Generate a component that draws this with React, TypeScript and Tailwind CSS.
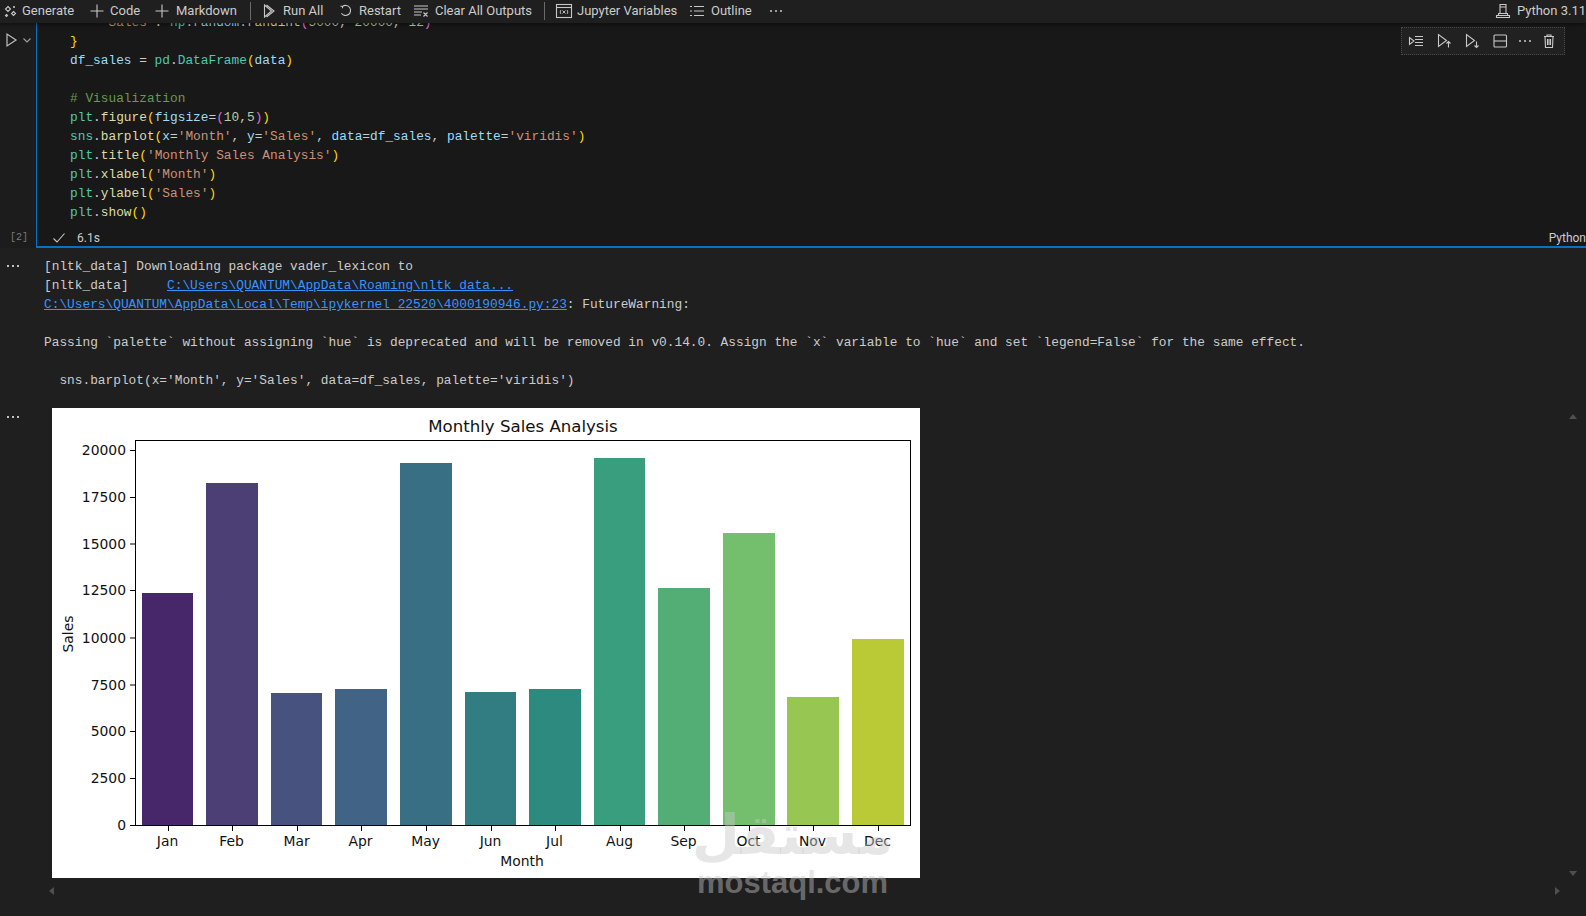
import type { ReactNode } from "react";

const ui = "font-['Roboto','Liberation_Sans',sans-serif]";
const mono = "font-['Liberation_Mono',monospace]";

const P = ({ c, children }: { c: string; children: ReactNode }) => <span style={{ color: c }}>{children}</span>;
const V = "#9cdcfe";
const F = "#dcdcaa";
const S = "#ce9178";
const T = "#4ec9b0";
const G = "#ffd700";
const M = "#da70d6";

const Mod = ({ n }: { n: string }) => <P c={T}>{n}</P>;

const codeLines: ReactNode[] = [
  <>
    {"    "}
    <P c={S}>'Sales'</P>: <Mod n="np" />.<P c={V}>random</P>.<P c={F}>randint</P>
    <P c={M}>(</P>
    <P c="#b5cea8">5000</P>, <P c="#b5cea8">20000</P>, <P c="#b5cea8">12</P>
    <P c={M}>)</P>
  </>,
  <P c={G}>{"}"}</P>,
  <>
    <P c={V}>df_sales</P> = <Mod n="pd" />.<P c={T}>DataFrame</P>
    <P c={G}>(</P>
    <P c={V}>data</P>
    <P c={G}>)</P>
  </>,
  <>&nbsp;</>,
  <P c="#6a9955"># Visualization</P>,
  <>
    <Mod n="plt" />.<P c={F}>figure</P>
    <P c={G}>(</P>
    <P c={V}>figsize</P>=<P c={M}>(</P>
    <P c="#b5cea8">10</P>,<P c="#b5cea8">5</P>
    <P c={M}>)</P>
    <P c={G}>)</P>
  </>,
  <>
    <Mod n="sns" />.<P c={F}>barplot</P>
    <P c={G}>(</P>
    <P c={V}>x</P>=<P c={S}>'Month'</P>, <P c={V}>y</P>=<P c={S}>'Sales'</P>, <P c={V}>data</P>=<P c={V}>df_sales</P>,{" "}
    <P c={V}>palette</P>=<P c={S}>'viridis'</P>
    <P c={G}>)</P>
  </>,
  <>
    <Mod n="plt" />.<P c={F}>title</P>
    <P c={G}>(</P>
    <P c={S}>'Monthly Sales Analysis'</P>
    <P c={G}>)</P>
  </>,
  <>
    <Mod n="plt" />.<P c={F}>xlabel</P>
    <P c={G}>(</P>
    <P c={S}>'Month'</P>
    <P c={G}>)</P>
  </>,
  <>
    <Mod n="plt" />.<P c={F}>ylabel</P>
    <P c={G}>(</P>
    <P c={S}>'Sales'</P>
    <P c={G}>)</P>
  </>,
  <>
    <Mod n="plt" />.<P c={F}>show</P>
    <P c={G}>()</P>
  </>,
];

const bars = [
  { m: "Jan", x0: 142, x1: 193, top: 593, fill: "#48266a" },
  { m: "Feb", x0: 206, x1: 258, top: 483, fill: "#4b3f75" },
  { m: "Mar", x0: 271, x1: 322, top: 693, fill: "#47527e" },
  { m: "Apr", x0: 335, x1: 387, top: 689, fill: "#416385" },
  { m: "May", x0: 400, x1: 452, top: 463, fill: "#396f85" },
  { m: "Jun", x0: 465, x1: 516, top: 692, fill: "#327d81" },
  { m: "Jul", x0: 529, x1: 581, top: 689, fill: "#2c8a7e" },
  { m: "Aug", x0: 594, x1: 645, top: 458, fill: "#389e7d" },
  { m: "Sep", x0: 658, x1: 710, top: 588, fill: "#53ae76" },
  { m: "Oct", x0: 723, x1: 775, top: 533, fill: "#74bf6e" },
  { m: "Nov", x0: 787, x1: 839, top: 697, fill: "#97c653" },
  { m: "Dec", x0: 852, x1: 904, top: 639, fill: "#bac936" },
];

const yTicks = [
  { l: "20000", y: 450 },
  { l: "17500", y: 497 },
  { l: "15000", y: 543.5 },
  { l: "12500", y: 590 },
  { l: "10000", y: 637.5 },
  { l: "7500", y: 684.5 },
  { l: "5000", y: 731 },
  { l: "2500", y: 778 },
  { l: "0", y: 825 },
];

function Chart() {
  return (
    <svg viewBox="52 408 868 470" width={868} height={470} className="block bg-white">
      <g fontFamily="DejaVu Sans, sans-serif" fill="#111">
        <text x="523" y="432" fontSize="16.6" textAnchor="middle">
          Monthly Sales Analysis
        </text>
        {bars.map((b) => (
          <rect key={b.m} x={b.x0} y={b.top} width={b.x1 - b.x0} height={825 - b.top} fill={b.fill} />
        ))}
        <rect x="135.5" y="440.5" width="775" height="385" fill="none" stroke="#000" strokeWidth="1" />
        {yTicks.map((t) => (
          <g key={t.l}>
            <line x1="130" x2="135" y1={t.y + 0.5} y2={t.y + 0.5} stroke="#000" />
            <text x="126" y={t.y + 5} fontSize="13.9" textAnchor="end">
              {t.l}
            </text>
          </g>
        ))}
        {bars.map((b) => {
          const cx = Math.round((b.x0 + b.x1) / 2);
          return (
            <g key={b.m}>
              <line x1={cx + 0.5} x2={cx + 0.5} y1="826" y2="831" stroke="#000" />
              <text x={cx - 0.5} y="846" fontSize="13.9" textAnchor="middle">
                {b.m}
              </text>
            </g>
          );
        })}
        <text x="522" y="866" fontSize="13.9" textAnchor="middle">
          Month
        </text>
        <text transform="translate(73 634) rotate(-90)" fontSize="13.9" textAnchor="middle">
          Sales
        </text>
      </g>
    </svg>
  );
}

const Ico = ({ w = 16, children }: { w?: number; children: ReactNode }) => (
  <svg width={w} height={16} viewBox={`0 0 ${w} 16`} fill="none" stroke="#c8c8c8" strokeWidth="1.1" className="shrink-0">
    {children}
  </svg>
);

const Sep = () => <div className="h-[18px] w-px bg-[#6a6a6a]" />;

function Toolbar() {
  return (
    <div className={`relative z-10 flex h-[23px] shrink-0 items-center justify-between whitespace-nowrap bg-[#1f1f1f] pb-[2px] text-[13px] text-[#cccccc] shadow-[0_2px_3px_rgba(0,0,0,0.35)] ${ui}`}>
      <div className="flex items-center">
        <div className="ml-[2px] w-[20px] shrink-0">
          <Ico>
            <path d="M6 3.5 8.5 6 6 8.5 3.5 6Z" />
            <path d="M11.5 8.5 13.5 10.5 11.5 12.5 9.5 10.5Z" />
            <path d="M4.5 11.5 5.5 12.5 4.5 13.5 3.5 12.5Z" />
            <path d="M12 3v2M11 4h2" />
          </Ico>
        </div>
        <span className="w-[52px]">Generate</span>
        <div className="ml-[15px] w-[21px]">
          <Ico>
            <path d="M8 1.5v13M1.5 8h13" />
          </Ico>
        </div>
        <span className="w-[29px]">Code</span>
        <div className="ml-[15px] w-[22px]">
          <Ico>
            <path d="M8 1.5v13M1.5 8h13" />
          </Ico>
        </div>
        <span className="w-[61px]">Markdown</span>
        <div className="ml-[13px]">
          <Sep />
        </div>
        <div className="ml-[10px] w-[22px]">
          <Ico>
            <path d="M3.5 2v12l7-6ZM5.5 2l7.5 6-7.5 6" />
          </Ico>
        </div>
        <span className="w-[40px]">Run All</span>
        <div className="ml-[15px] w-[21px]">
          <Ico>
            <path d="M4.5 3.2h-2m2 0v2.1M4.6 3.4a5 5 0 1 1-1.2 6.8" />
          </Ico>
        </div>
        <span className="w-[39px]">Restart</span>
        <div className="ml-[15px] w-[22px]">
          <Ico>
            <path d="M1 3h14M1 6h14M1 9h8M1 12h7M10.5 9.5l4 4M14.5 9.5l-4 4" />
          </Ico>
        </div>
        <span className="w-[98px]">Clear All Outputs</span>
        <div className="ml-[11px]">
          <Sep />
        </div>
        <div className="ml-[10px] w-[22px]">
          <Ico w={18}>
            <rect x="1.5" y="1.5" width="15" height="13" />
            <path d="M1.5 4.5h15" />
            <path d="M6 7c-1 1-1 3 0 4M12 7c1 1 1 3 0 4M7.5 7.5l3 3M10.5 7.5l-3 3" strokeWidth="0.9" />
          </Ico>
        </div>
        <span className="w-[97px]">Jupyter Variables</span>
        <div className="ml-[15px] w-[22px]">
          <Ico>
            <path d="M5 3.5h10M5 8h10M5 12.5h10M1 3.5h2M1 8h2M1 12.5h2" />
          </Ico>
        </div>
        <span className="w-[42px]">Outline</span>
        <div className="ml-[15px]">
          <Ico>
            <path d="M2 8h2M7 8h2M12 8h2" strokeWidth="1.6" />
          </Ico>
        </div>
      </div>
      <div className="flex w-[91px] shrink-0 items-center overflow-hidden">
        <div className="w-[22px] shrink-0">
          <Ico>
            <path d="M5 1.5h6v9H5zM3.5 10.5h9v2h-9zM1.5 12.5h13v2h-13zM5 4h6" />
          </Ico>
        </div>
        <span>Python 3.11.9</span>
      </div>
    </div>
  );
}

function CellActions() {
  return (
    <div className="absolute right-[21px] top-[4px] flex h-[28px] w-[164px] items-center border border-dotted border-[#4a4a4a] bg-[#212121] pl-[6px]">
      <Ico>
        <path d="M1.5 4.5v7l4.5-3.5ZM7 3.5h8M7 6.5h8M7 9.5h8M7 12.5h8" />
      </Ico>
      <div className="ml-[12px]">
        <Ico>
          <path d="M2.5 1.5v12l8-6ZM12.5 14.5v-6M10.5 10.5l2-2 2 2" />
        </Ico>
      </div>
      <div className="ml-[12px]">
        <Ico>
          <path d="M2.5 1.5v12l8-6ZM12.5 8.5v6M10.5 12.5l2 2 2-2" />
        </Ico>
      </div>
      <div className="ml-[12px]">
        <Ico>
          <rect x="2" y="2" width="12.5" height="12" rx="1" />
          <path d="M2 8h12.5" />
        </Ico>
      </div>
      <div className="ml-[9px]">
        <Ico>
          <path d="M2 8h2M7 8h2M12 8h2" strokeWidth="1.6" />
        </Ico>
      </div>
      <div className="ml-[8px]">
        <Ico>
          <path d="M3 3.5h10M6 3.5V2h4v1.5M4 3.5l.5 11h7l.5-11M6.5 6v6M8 6v6M9.5 6v6" />
        </Ico>
      </div>
    </div>
  );
}

function CodeCell() {
  return (
    <div className="relative flex h-[225px] shrink-0 overflow-hidden">
      <div className="relative w-[36px] shrink-0 bg-[#1c1c1c]">
        <div className="mt-[9px] flex items-center pl-[5px]">
          <svg width="14" height="16" viewBox="0 0 14 16" fill="none" stroke="#c0c0c0" strokeWidth="1.2">
            <path d="M2 2v12l9-6Z" />
          </svg>
          <svg width="10" height="10" viewBox="0 0 10 10" fill="none" stroke="#a0a0a0" strokeWidth="1.1" className="ml-[3px]">
            <path d="M1.5 3.5 5 7l3.5-3.5" />
          </svg>
        </div>
        <span className={`absolute bottom-[4px] left-[10px] text-[10px] leading-[12px] text-[#7a7a7a] ${mono}`}>[2]</span>
      </div>
      <div className="relative flex-1 border-b-2 border-l border-[#0a70c0] bg-[#181818] pl-[33px]">
        <div className={`-mt-[10px] whitespace-pre text-[12.82px] leading-[19px] text-[#cccccc] ${mono}`}>
          {codeLines.map((line, i) => (
            <div key={i} className="h-[19px]">
              {line}
            </div>
          ))}
        </div>
        <div className={`mt-[8px] -ml-[33px] flex items-center text-[12px] leading-[16px] text-[#cccccc] ${ui}`}>
          <svg width="14" height="14" viewBox="0 0 14 14" fill="none" stroke="#c8c8c8" strokeWidth="1.1" className="ml-[15px]">
            <path d="M1.5 7.5 5 11l7.5-8.5" />
          </svg>
          <span className="ml-[11px]">6.1s</span>
          <span className="ml-auto">Python</span>
        </div>
        <CellActions />
      </div>
    </div>
  );
}

function Dots() {
  return (
    <svg width="14" height="4" viewBox="0 0 14 4" fill="#c0c0c0">
      <rect x="0" y="1" width="2" height="2" />
      <rect x="5" y="1" width="2" height="2" />
      <rect x="10" y="1" width="2" height="2" />
    </svg>
  );
}

const Lnk = ({ children }: { children: ReactNode }) => <span className="text-[#3794ff] underline">{children}</span>;

function OutputText() {
  return (
    <div className="flex shrink-0 pt-[9px]">
      <div className="w-[44px] shrink-0 pl-[7px] pt-[7px]">
        <Dots />
      </div>
      <div className={`whitespace-pre text-[12.82px] leading-[19px] text-[#cccccc] ${mono}`}>
        <div>[nltk_data] Downloading package vader_lexicon to</div>
        <div>
          [nltk_data]{"     "}
          <Lnk>C:\Users\QUANTUM\AppData\Roaming\nltk_data...</Lnk>
        </div>
        <div>
          <Lnk>C:\Users\QUANTUM\AppData\Local\Temp\ipykernel_22520\4000190946.py:23</Lnk>: FutureWarning:
        </div>
        <div>&nbsp;</div>
        <div>Passing `palette` without assigning `hue` is deprecated and will be removed in v0.14.0. Assign the `x` variable to `hue` and set `legend=False` for the same effect.</div>
        <div>&nbsp;</div>
        <div>{"  "}sns.barplot(x='Month', y='Sales', data=df_sales, palette='viridis')</div>
      </div>
    </div>
  );
}

const Tri = ({ cls, d }: { cls: string; d: string }) => (
  <svg width="8" height="8" viewBox="0 0 8 8" fill="#4f4f4f" className={`absolute ${cls}`}>
    <path d={d} />
  </svg>
);

export default function App() {
  return (
    <div className="relative flex h-[916px] w-[1586px] flex-col overflow-hidden bg-[#1f1f1f]">
      <Toolbar />
      <CodeCell />
      <OutputText />
      <div className="flex pt-[18px]">
        <div className="w-[52px] shrink-0 pl-[7px] pt-[7px]">
          <Dots />
        </div>
        <Chart />
      </div>

      <Tri cls="left-[1569px] top-[413px]" d="M0 6 4 1l4 5Z" />
      <Tri cls="left-[1569px] top-[869px]" d="M0 2h8L4 7Z" />
      <Tri cls="left-[1553px] top-[887px]" d="M2 0l5 4-5 4Z" />
      <Tri cls="left-[48px] top-[887px]" d="M6 0 1 4l5 4Z" />

      {/* watermark */}
      <div className="pointer-events-none absolute left-[697px] top-[800px] flex w-[191px] flex-col items-center text-[rgba(199,199,199,0.45)]">
        <span dir="rtl" className="font-['DejaVu_Sans',sans-serif] text-[55px] font-bold leading-[70px]">
          مستقل
        </span>
        <span className="font-['Liberation_Sans',sans-serif] text-[31px] font-bold leading-[26px]">mostaql.com</span>
      </div>
    </div>
  );
}
